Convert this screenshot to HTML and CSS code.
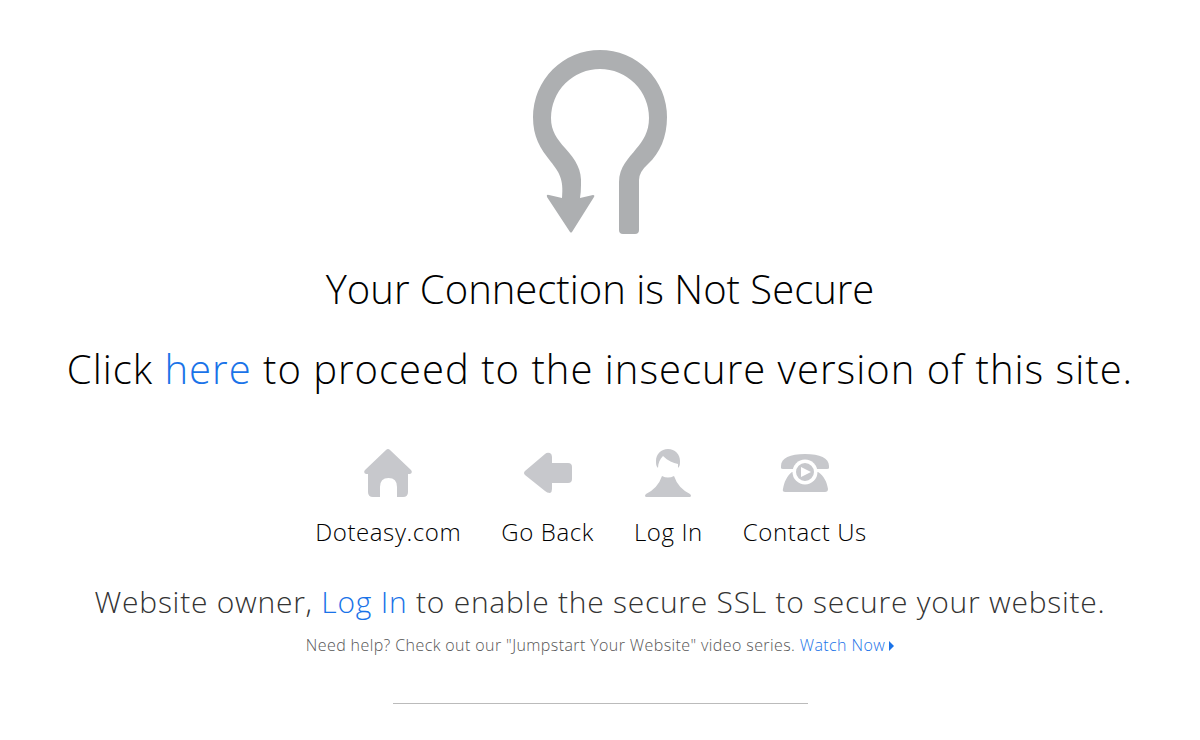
FILE: index.html
```html
<!DOCTYPE html>
<html lang="en">
<head>
  <meta charset="UTF-8">
  <title>Your Connection is Not Secure</title>
  <link rel="stylesheet" href="styles.css">
</head>
<body>
  <main class="page">
    <svg class="uturn" viewBox="0 0 134 184" aria-hidden="true">
      <path d="M86 180V132C86 117 96 108 103 99C110 91 116 82 116 68A49 49 0 0 0 18 68C18 81 24 89 32 98C43 110 49 120 48 135Q48 142 47 148L60 145Q62 145 61 147L39 182Q38 183 37 182L14 147Q13 144 16 145L29 148C31 129 26 122 18 112C7 98 0 87 0 67A67 67 0 0 1 134 67C134 87 127 103 115 114Q106 122 106 130V180Q106 184 102 184H90Q86 184 86 180Z"/>
    </svg>
    <h1>Your Connection is Not Secure</h1>
    <p class="proceed">Click <a href="#">here</a> to proceed to the insecure version of this site.</p>

    <nav class="links">
      <a href="#">
        <svg viewBox="0 0 48 48" aria-hidden="true"><path d="M22 1Q24-1 26 1L47 21Q49 24 46 25H44V43Q44 48 39 48H33V38Q33 29 24.500 29T16 38V48H9Q4 48 4 43V25H2Q-1 24 1 21Z"/></svg>
        Doteasy.com
      </a>
      <a href="#">
        <svg viewBox="0 0 48 48" aria-hidden="true"><path d="M1 26Q-1 24 1 22L21 5Q23 3 26 4Q28 5 28 8V14H44Q48 14 48 18V30Q48 34 44 34H28V40Q28 43 26 44Q23 44 21 42Z"/></svg>
        Go Back
      </a>
      <a href="#">
        <svg viewBox="0 0 48 48" aria-hidden="true"><path d="M14 19C12 17 12 15 12 12C12 5 17 0 24 0S36 5 36 12C36 15 36 17 34 19L34 15C29 14 24 12 19 7C16 10 14 14 14 19ZM18 27Q24 30 30 27Q34 39 46 45Q48 47 46 48H2Q0 47 2 45Q14 39 18 27Z"/></svg>
        Log In
      </a>
      <a href="#">
        <svg viewBox="0 0 48 48" aria-hidden="true">
          <path d="M0 17C0 9 9 5 24 5S48 9 48 17Q49 20 46 20H2Q-1 20 0 17ZM11 23H37C43 27 46 33 47 40Q47 43 44 43H4Q1 43 2 40C3 33 6 27 11 23Z"/>
          <circle class="dial" cx="24" cy="23" r="12.500"/>
          <path fill-rule="evenodd" d="M24 14A9 9 0 1 0 24 32A9 9 0 1 0 24 14ZM20 18L30 23L20 28Z"/>
        </svg>
        Contact Us
      </a>
    </nav>

    <p class="owner">Website owner, <a href="#">Log In</a> to enable the secure SSL to secure your website.</p>
    <p class="help">Need help? Check out our "Jumpstart Your Website" video series. <a class="watch" href="#">Watch Now</a></p>
    <hr>
  </main>
</body>
</html>
```
FILE: styles.css
```css
body {
  margin: 0;
  background: #fff;
  color: #000;
  font-family: "Open Sans", sans-serif;
  font-weight: 300;
}
.page {
  padding: 50px 20px 0;
  text-align: center;
}
.uturn {
  display: block;
  width: 134px;
  margin: 0 auto;
  fill: #adafb1;
}
h1 {
  margin: 27px 0 0;
  font-size: 40px;
  font-weight: 300;
  line-height: 56px;
}
p {
  margin: 0;
  letter-spacing: 0.025em;
}
a {
  color: #1a73e8;
  text-decoration: none;
}
.proceed {
  margin-top: 24px;
  font-size: 40px;
  line-height: 56px;
}
.links {
  display: flex;
  justify-content: center;
  gap: 40px;
  margin: 52px 18px 0 0;
  font-size: 24px;
  line-height: 34px;
  letter-spacing: 0.025em;
}
.links a {
  display: flex;
  flex-direction: column;
  align-items: center;
  gap: 18px;
  color: #000;
}
.links svg {
  width: 48px;
  height: 48px;
  fill: #c7c8cc;
}
.links .dial {
  fill: #fff;
}
.owner {
  margin-top: 32px;
  color: #333;
  font-size: 30px;
  line-height: 42px;
}
.help {
  margin-top: 10px;
  color: #555;
  font-size: 16px;
  line-height: 24px;
}
.watch::after {
  content: "";
  display: inline-block;
  margin-left: 4px;
  border: 5px solid transparent;
  border-left-color: #1a73e8;
  border-right: 0;
}
hr {
  width: 415px;
  margin: 46px auto 0;
  border: 0;
  border-top: 1px solid #bbb;
}
```
